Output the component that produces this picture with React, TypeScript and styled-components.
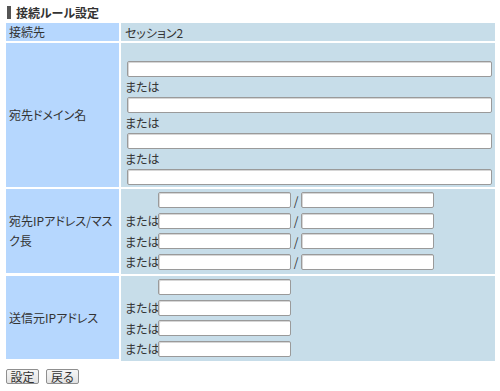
import React from 'react';
import styled, { createGlobalStyle } from 'styled-components';

const GlobalStyle = createGlobalStyle`
  body {
    margin: 0;
    background: #ffffff;
    font-family: "Noto Sans CJK JP", "Noto Sans", sans-serif;
    font-size: 12px;
    color: #333333;
    font-feature-settings: "palt";
  }
`;

const Page = styled.div`
  padding: 4px 5px 0 6px;
`;

const Title = styled.h2`
  display: flex;
  align-items: center;
  gap: 5px;
  margin: 0 0 3px 1px;
  height: 16px;
  font-size: 12px;
  font-weight: bold;
  color: #333333;
`;

const TitleBar = styled.span`
  width: 4px;
  height: 13px;
  background: #555555;
`;

const Table = styled.div`
  display: grid;
  grid-template-columns: 113px 1fr;
  gap: 2px;
  width: 489px;
`;

const Head = styled.div<{ $h: number }>`
  display: flex;
  align-items: center;
  height: ${({ $h }) => $h}px;
  padding: 0 4px 0 3px;
  background: #b6d7fe;
  line-height: 20px;
`;

const Cell = styled.div<{ $pt?: number }>`
  background: #c7dde9;
  padding: ${({ $pt }) => $pt ?? 0}px 3px 0 4px;
  box-sizing: border-box;
`;

const PlainValue = styled.div`
  display: flex;
  align-items: center;
  height: 18px;
`;

const Stack = styled.div`
  display: flex;
  flex-direction: column;
  padding-left: 2px;
`;

const Or = styled.div`
  height: 20px;
  line-height: 20px;
  margin-left: -2px;
`;

const Input = styled.input<{ $w?: number }>`
  box-sizing: border-box;
  width: ${({ $w }) => ($w ? `${$w}px` : '100%')};
  height: 16px;
  margin: 0;
  padding: 0 2px;
  border: 1px solid #9a9a9a;
  border-radius: 2px;
  background: #ffffff;
  box-shadow: inset 1px 1px 0 #d6d6d6;
  font: inherit;
`;

const Line = styled.div`
  display: flex;
  align-items: center;
  height: 16px;
  margin-bottom: 4.5px;
`;

const OrLabel = styled.span`
  width: 33px;
  flex: none;
  white-space: nowrap;
  overflow: visible;
`;

const Slash = styled.span`
  width: 10px;
  text-align: center;
  flex: none;
`;

const Buttons = styled.div`
  display: flex;
  gap: 7px;
  margin-top: 8px;
`;

const Button = styled.button`
  height: 15px;
  width: 33px;
  padding: 0;
  box-sizing: border-box;
  border: 1px solid #8f8f8f;
  border-radius: 2px;
  background: linear-gradient(#f6f6f6, #e2e2e2);
  font: inherit;
  font-size: 12px;
  line-height: 13px;
  color: #333333;
`;

export default function App() {
  return (
    <>
      <GlobalStyle />
      <Page>
        <Title>
          <TitleBar />
          接続ルール設定
        </Title>
        <Table>
          <Head $h={18}>接続先</Head>
          <Cell>
            <PlainValue>セッション2</PlainValue>
          </Cell>

          <Head $h={144}>宛先ドメイン名</Head>
          <Cell $pt={18}>
            <Stack>
              <Input />
              <Or>または</Or>
              <Input />
              <Or>または</Or>
              <Input />
              <Or>または</Or>
              <Input />
            </Stack>
          </Cell>

          <Head $h={84}>宛先IPアドレス/マスク長</Head>
          <Cell $pt={3}>
            {[0, 1, 2, 3].map(i => (
              <Line key={i}>
                <OrLabel>{i > 0 ? 'または' : ''}</OrLabel>
                <Input $w={133} />
                <Slash>/</Slash>
                <Input $w={133} />
              </Line>
            ))}
          </Cell>

          <Head $h={83}>送信元IPアドレス</Head>
          <Cell $pt={3}>
            {[0, 1, 2, 3].map(i => (
              <Line key={i}>
                <OrLabel>{i > 0 ? 'または' : ''}</OrLabel>
                <Input $w={133} />
              </Line>
            ))}
          </Cell>
        </Table>
        <Buttons>
          <Button>設定</Button>
          <Button>戻る</Button>
        </Buttons>
      </Page>
    </>
  );
}
